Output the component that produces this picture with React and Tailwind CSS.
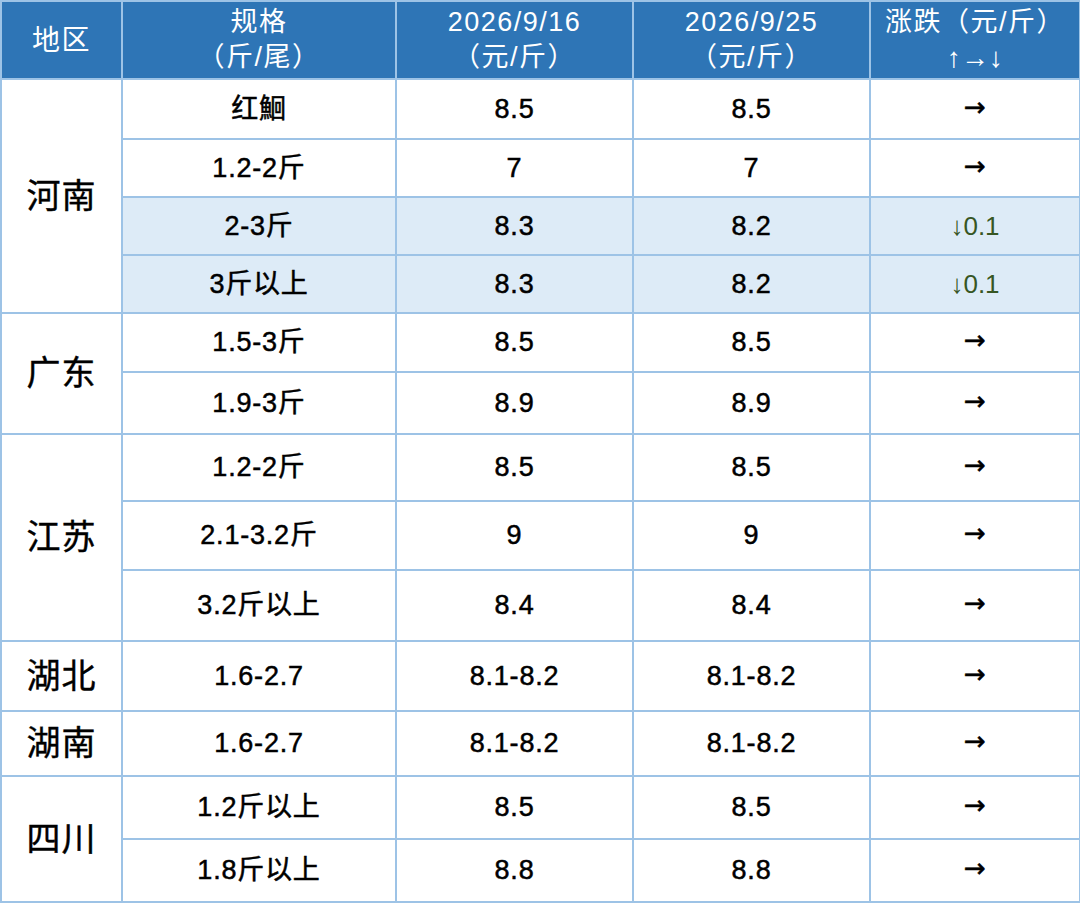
const font = { fontFamily: '"Liberation Sans", "Noto Sans CJK SC", sans-serif' };

const groups = [
  {
    region: "河南",
    rows: [
      { spec: "红鮰", a: "8.5", b: "8.5", t: "→", h: 60 },
      { spec: "1.2-2斤", a: "7", b: "7", t: "→", h: 58 },
      { spec: "2-3斤", a: "8.3", b: "8.2", t: "↓0.1", h: 58, hl: true },
      { spec: "3斤以上", a: "8.3", b: "8.2", t: "↓0.1", h: 58, hl: true },
    ],
  },
  {
    region: "广东",
    rows: [
      { spec: "1.5-3斤", a: "8.5", b: "8.5", t: "→", h: 59 },
      { spec: "1.9-3斤", a: "8.9", b: "8.9", t: "→", h: 62 },
    ],
  },
  {
    region: "江苏",
    rows: [
      { spec: "1.2-2斤", a: "8.5", b: "8.5", t: "→", h: 67 },
      { spec: "2.1-3.2斤", a: "9", b: "9", t: "→", h: 69 },
      { spec: "3.2斤以上", a: "8.4", b: "8.4", t: "→", h: 71 },
    ],
  },
  { region: "湖北", rows: [{ spec: "1.6-2.7", a: "8.1-8.2", b: "8.1-8.2", t: "→", h: 70 }] },
  { region: "湖南", rows: [{ spec: "1.6-2.7", a: "8.1-8.2", b: "8.1-8.2", t: "→", h: 65 }] },
  {
    region: "四川",
    rows: [
      { spec: "1.2斤以上", a: "8.5", b: "8.5", t: "→", h: 63 },
      { spec: "1.8斤以上", a: "8.8", b: "8.8", t: "→", h: 63 },
    ],
  },
];

const cell = "border-2 border-[#9dc3e6] text-center align-middle";
const data = "text-[27px] tracking-[0.8px] [-webkit-text-stroke:0.5px_black]";

export default function App() {
  return (
    <div className="w-[1080px] h-[903px] bg-white overflow-hidden [text-spacing-trim:space-all]" style={font}>
      <table className="w-[1079px] table-fixed border-collapse">
        <colgroup>
          <col className="w-[121px]" />
          <col className="w-[274px]" />
          <col className="w-[237px]" />
          <col className="w-[237px]" />
          <col className="w-[210px]" />
        </colgroup>
        <thead>
          <tr className="h-[78px] bg-[#2e75b6] text-white text-[27px] leading-[35px] tracking-[1.5px]">
            <th className={`${cell} font-normal text-[28px]`}>地区</th>
            <th className={`${cell} font-normal`}>
              规格
              <br />
              （斤/尾）
            </th>
            <th className={`${cell} font-normal`}>
              2026/9/16
              <br />
              （元/斤）
            </th>
            <th className={`${cell} font-normal`}>
              2026/9/25
              <br />
              （元/斤）
            </th>
            <th className={`${cell} font-normal`}>
              涨跌（元/斤）
              <br />
              <span className="text-[28px] tracking-normal">↑→↓</span>
            </th>
          </tr>
        </thead>
        <tbody className="text-black">
          {groups.map((g) =>
            g.rows.map((r, i) => (
              <tr key={g.region + i} style={{ height: r.h }}>
                {i === 0 && (
                  <td
                    rowSpan={g.rows.length}
                    className={`${cell} text-[34px] tracking-[1px] [-webkit-text-stroke:0.4px_black]`}
                  >
                    {g.region}
                  </td>
                )}
                <td className={`${cell} ${data} ${r.hl ? "bg-[#ddebf7]" : ""}`}>{r.spec}</td>
                <td className={`${cell} ${data} ${r.hl ? "bg-[#ddebf7]" : ""}`}>{r.a}</td>
                <td className={`${cell} ${data} ${r.hl ? "bg-[#ddebf7]" : ""}`}>{r.b}</td>
                {r.hl ? (
                  <td className={`${cell} bg-[#ddebf7] text-[#375623] text-[26px]`}>{r.t}</td>
                ) : (
                  <td className={`${cell} pb-1 text-[26px] font-['DejaVu_Sans'] [-webkit-text-stroke:0.6px_black]`}>
                    {r.t}
                  </td>
                )}
              </tr>
            ))
          )}
        </tbody>
      </table>
    </div>
  );
}
